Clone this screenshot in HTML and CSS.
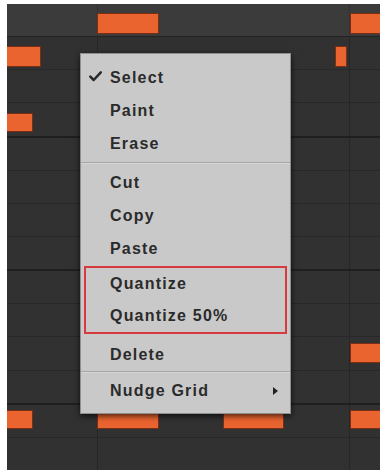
FILE: index.html
```
<!DOCTYPE html>
<html>
<head>
<meta charset="utf-8">
<link rel="stylesheet" href="styles.css">
</head>
<body>
<div class="roll">
  <div class="row top"></div>
  <div class="row"></div>
  <div class="row"></div>
  <div class="row bar"></div>
  <div class="row"></div>
  <div class="row"></div>
  <div class="row"></div>
  <div class="row bar"></div>
  <div class="row"></div>
  <div class="row"></div>
  <div class="row"></div>
  <div class="row bar"></div>
  <div class="row"></div>
  <div class="row last"></div>

  <div class="note n1"></div>
  <div class="note n2"></div>
  <div class="note n3"></div>
  <div class="note n4"></div>
  <div class="note n5"></div>
  <div class="note n6"></div>
  <div class="note n7"></div>
  <div class="note n8"></div>
  <div class="note n9"></div>
  <div class="note n10"></div>

  <div class="menu">
    <div class="item checked">
      <svg class="check" width="13" height="11" viewBox="0 0 13 11"><path d="M1.3 5.6 L4.7 9 L11.8 1.4" fill="none" stroke="#2a2a2a" stroke-width="2.5" stroke-linecap="round" stroke-linejoin="round"/></svg>
      <span>Select</span>
    </div>
    <div class="item"><span>Paint</span></div>
    <div class="item"><span>Erase</span></div>
    <div class="sep"></div>
    <div class="item"><span>Cut</span></div>
    <div class="item"><span>Copy</span></div>
    <div class="item"><span>Paste</span></div>
    <div class="highlight">
      <div class="item"><span>Quantize</span></div>
      <div class="item"><span>Quantize 50%</span></div>
    </div>
    <div class="item delete"><span>Delete</span></div>
    <div class="sep sep2"></div>
    <div class="item sub"><span>Nudge Grid</span><span class="arrow"></span></div>
  </div>
</div>
</body>
</html>
```
FILE: styles.css
```
html, body {
  margin: 0;
  padding: 0;
  background: #ffffff;
}
body {
  width: 382px;
  height: 473px;
  overflow: hidden;
  font-family: "Liberation Sans", Arial, sans-serif;
}
.roll {
  position: relative;
  margin: 4px 2px 3px 7px;
  width: 373px;
  height: 466px;
  display: flex;
  flex-direction: column;
  background-color: #313131;
  background-image:
    linear-gradient(to right, transparent 90px, #262626 90px, #262626 91px, transparent 91px),
    linear-gradient(to right, transparent 342px, #262626 342px, #262626 343px, transparent 343px);
}
.row {
  flex: 1;
  border-bottom: 1px solid #282828;
}
.row.top {
  background: rgba(255,255,255,0.05);
  border-bottom: 1px solid #232323;
}
.row.bar {
  border-bottom: 2px solid #1f1f1f;
}
.row.last {
  border-bottom: none;
}
.note {
  position: absolute;
  background: #ea6430;
  border: 1px solid #7a2e14;
  box-sizing: border-box;
}
.n1 { left: 90px; top: 9px; width: 62px; height: 21px; }
.n2 { left: 343px; top: 9px; width: 30px; height: 21px; border-right: none; }
.n3 { left: 0; top: 42px; width: 34px; height: 21px; border-left: none; }
.n4 { left: 328px; top: 42px; width: 12px; height: 21px; }
.n5 { left: 0; top: 109px; width: 26px; height: 19px; border-left: none; }
.n6 { left: 343px; top: 339px; width: 30px; height: 20px; border-right: none; }
.n7 { left: 0; top: 406px; width: 26px; height: 19px; border-left: none; }
.n8 { left: 90px; top: 406px; width: 62px; height: 19px; }
.n9 { left: 216px; top: 406px; width: 61px; height: 19px; }
.n10 { left: 343px; top: 406px; width: 30px; height: 19px; border-right: none; }

.menu {
  position: absolute;
  left: 73px;
  top: 49px;
  width: 211px;
  box-sizing: border-box;
  padding: 7px 0 6px;
  background: #c9c9c9;
  border: 1px solid #8e8e8e;
  box-shadow: 0 2px 6px rgba(0,0,0,0.7);
}
.item {
  position: relative;
  height: 33px;
  display: flex;
  align-items: center;
  padding-left: 29px;
  padding-right: 12px;
  font-size: 16px;
  font-weight: bold;
  letter-spacing: 1.2px;
  color: #2b2b2b;
}
.check {
  position: absolute;
  left: 8px;
  top: 10px;
}
.sep {
  height: 1px;
  margin: 2px 0 2px;
  background: #a6a6a6;
  border-bottom: 1px solid #d6d6d6;
}
.sep2 {
  margin: 0 0 1px;
}
.highlight {
  margin: 1px 3px 0;
  border: 2px solid #d63a40;
}
.highlight .item {
  height: 32px;
  padding-left: 24px;
}
.delete {
  margin-top: 4px;
}
.sub {
  justify-content: space-between;
}
.arrow {
  width: 0;
  height: 0;
  border-top: 4px solid transparent;
  border-bottom: 4px solid transparent;
  border-left: 5px solid #222;
}
```
